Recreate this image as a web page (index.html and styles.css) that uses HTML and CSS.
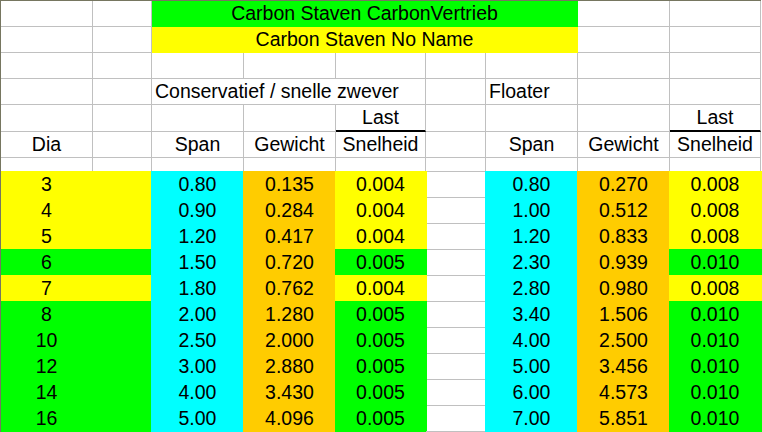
FILE: index.html
```html
<!DOCTYPE html>
<html lang="nl">
<head>
<meta charset="utf-8">
<title>Carbon Staven</title>
<link rel="stylesheet" href="styles.css">
</head>
<body>
<div class="sheet">
  <!-- row 1 -->
  <div class="c"></div><div class="c"></div>
  <div class="c span5 hg">Carbon Staven CarbonVertrieb</div>
  <div class="c"></div><div class="c"></div>
  <!-- row 2 -->
  <div class="c"></div><div class="c"></div>
  <div class="c span5 hy">Carbon Staven No Name</div>
  <div class="c"></div><div class="c"></div>
  <!-- row 3 -->
  <div class="c"></div><div class="c"></div><div class="c"></div><div class="c"></div><div class="c"></div><div class="c"></div><div class="c"></div><div class="c"></div><div class="c"></div>
  <!-- row 4 -->
  <div class="c"></div><div class="c"></div>
  <div class="c span3 left">Conservatief / snelle zwever</div>
  <div class="c"></div>
  <div class="c left">Floater</div>
  <div class="c"></div><div class="c"></div>
  <!-- row 5 -->
  <div class="c"></div><div class="c"></div><div class="c"></div><div class="c"></div>
  <div class="c under">Last</div>
  <div class="c"></div><div class="c"></div><div class="c"></div>
  <div class="c under">Last</div>
  <!-- row 6 -->
  <div class="c">Dia</div><div class="c"></div><div class="c">Span</div><div class="c">Gewicht</div><div class="c">Snelheid</div>
  <div class="c"></div><div class="c">Span</div><div class="c">Gewicht</div><div class="c">Snelheid</div>
  <!-- row 7 -->
  <div class="c"></div><div class="c"></div><div class="c"></div><div class="c"></div><div class="c"></div><div class="c"></div><div class="c"></div><div class="c"></div><div class="c"></div>

  <!-- data rows -->
  <div class="c fill y edge">3</div><div class="c fill y"></div><div class="c fill cy">0.80</div><div class="c fill or">0.135</div><div class="c fill y">0.004</div><div class="c"></div><div class="c fill cy">0.80</div><div class="c fill or">0.270</div><div class="c fill y">0.008</div>

  <div class="c fill y edge">4</div><div class="c fill y"></div><div class="c fill cy">0.90</div><div class="c fill or">0.284</div><div class="c fill y">0.004</div><div class="c"></div><div class="c fill cy">1.00</div><div class="c fill or">0.512</div><div class="c fill y">0.008</div>

  <div class="c fill y edge">5</div><div class="c fill y"></div><div class="c fill cy">1.20</div><div class="c fill or">0.417</div><div class="c fill y">0.004</div><div class="c"></div><div class="c fill cy">1.20</div><div class="c fill or">0.833</div><div class="c fill y">0.008</div>

  <div class="c fill g edge">6</div><div class="c fill g"></div><div class="c fill cy">1.50</div><div class="c fill or">0.720</div><div class="c fill g">0.005</div><div class="c"></div><div class="c fill cy">2.30</div><div class="c fill or">0.939</div><div class="c fill g">0.010</div>

  <div class="c fill y edge">7</div><div class="c fill y"></div><div class="c fill cy">1.80</div><div class="c fill or">0.762</div><div class="c fill y">0.004</div><div class="c"></div><div class="c fill cy">2.80</div><div class="c fill or">0.980</div><div class="c fill y">0.008</div>

  <div class="c fill g edge">8</div><div class="c fill g"></div><div class="c fill cy">2.00</div><div class="c fill or">1.280</div><div class="c fill g">0.005</div><div class="c"></div><div class="c fill cy">3.40</div><div class="c fill or">1.506</div><div class="c fill g">0.010</div>

  <div class="c fill g edge">10</div><div class="c fill g"></div><div class="c fill cy">2.50</div><div class="c fill or">2.000</div><div class="c fill g">0.005</div><div class="c"></div><div class="c fill cy">4.00</div><div class="c fill or">2.500</div><div class="c fill g">0.010</div>

  <div class="c fill g edge">12</div><div class="c fill g"></div><div class="c fill cy">3.00</div><div class="c fill or">2.880</div><div class="c fill g">0.005</div><div class="c"></div><div class="c fill cy">5.00</div><div class="c fill or">3.456</div><div class="c fill g">0.010</div>

  <div class="c fill g edge">14</div><div class="c fill g"></div><div class="c fill cy">4.00</div><div class="c fill or">3.430</div><div class="c fill g">0.005</div><div class="c"></div><div class="c fill cy">6.00</div><div class="c fill or">4.573</div><div class="c fill g">0.010</div>

  <div class="c fill g edge">16</div><div class="c fill g"></div><div class="c fill cy">5.00</div><div class="c fill or">4.096</div><div class="c fill g">0.005</div><div class="c"></div><div class="c fill cy">7.00</div><div class="c fill or">5.851</div><div class="c fill g">0.010</div>
</div>
</body>
</html>
```

FILE: styles.css
```css
* {
  box-sizing: border-box;
}

html,
body {
  margin: 0;
  padding: 0;
  background: #ffffff;
}

body {
  font-family: "Liberation Sans", Arial, sans-serif;
  font-size: 19.5px;
  color: #000000;
  overflow: hidden;
}

.sheet {
  display: grid;
  grid-template-columns: 92px 59px 92px 92px 90px 60px 92px 92px 91px;
  grid-template-rows: 26px 26px 26px 26px 27px 26px 14px repeat(10, 26px);
  width: 761px;
  border-top: 1px solid #767660;
  border-left: 1px solid #767660;
}

.c {
  display: flex;
  align-items: flex-end;
  justify-content: center;
  padding: 0 3px 1px;
  border-right: 1px solid #c0c0c0;
  border-bottom: 1px solid #c0c0c0;
  white-space: nowrap;
  line-height: normal;
  overflow: visible;
}

.left {
  justify-content: flex-start;
}

.span3 {
  grid-column: span 3;
}

.span5 {
  grid-column: span 5;
}

.under {
  border-bottom: 2px solid #000000;
}

/* merged header bands */
.hg {
  background: #00ff00;
  border-color: #00ff00;
}

.hy {
  background: #ffff00;
  border-color: #ffff00;
}

/* filled data cells cover their surrounding grid lines */
.y {
  --fill: #ffff00;
}

.g {
  --fill: #00ff00;
}

.cy {
  --fill: #00ffff;
}

.or {
  --fill: #ffcc00;
}

.fill {
  background: var(--fill);
  border-color: var(--fill);
  box-shadow: 0 0 0 1px var(--fill);
}

.fill.edge {
  box-shadow: 0 -1px 0 0 var(--fill);
}
```
